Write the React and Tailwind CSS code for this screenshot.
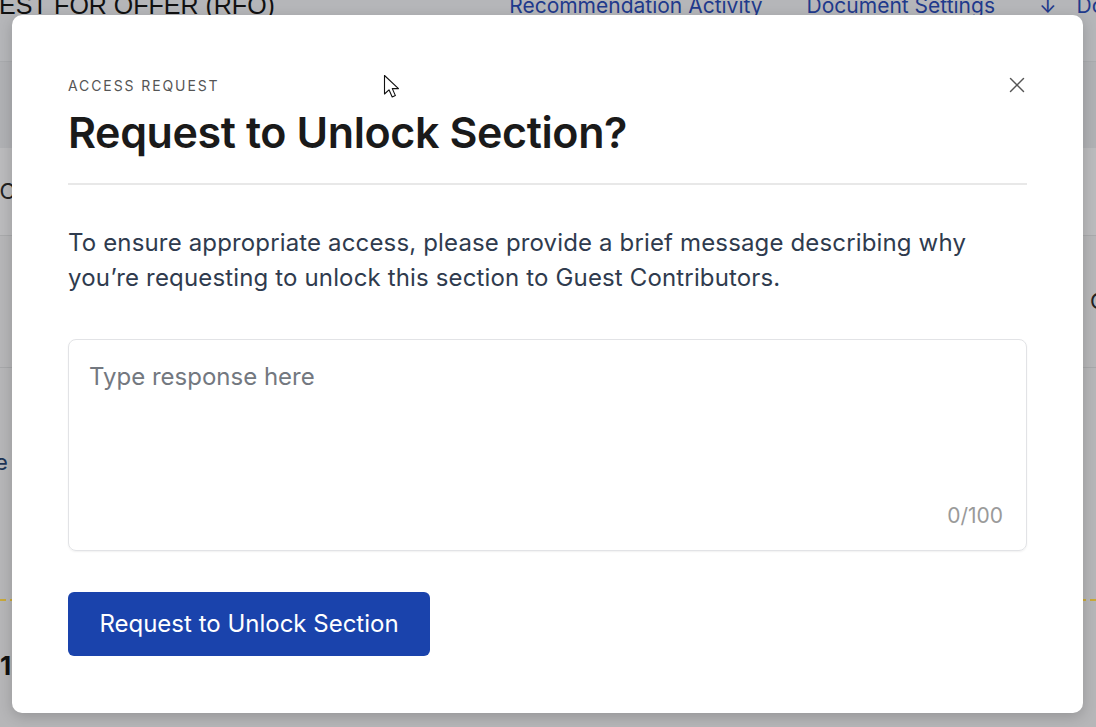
import { X } from 'lucide-react'

const font = { fontFamily: 'Inter, "Noto Sans", sans-serif' }

function BackgroundPage() {
  return (
    <div className="h-[727px] w-[1096px] overflow-hidden bg-[#b7b8ba] flex flex-col" style={font}>
      {/* top header */}
      <div className="h-[62px] shrink-0 flex items-start border-b border-[#a9abae] bg-[#b5b6b9]">
        <div className="-ml-[1px] -mt-[13px] text-[25px] text-[#111] whitespace-nowrap" style={{ fontFamily: '"Liberation Sans", Arial, sans-serif' }}>
          EST FOR OFFER (RFO)
        </div>
        <div className="ml-auto -mt-[10px] flex items-center gap-[44px] text-[21px] text-[#1f3a8c] whitespace-nowrap -mr-[80px]">
          <span>Recommendation Activity</span>
          <span>Document Settings</span>
          <span className="flex items-center gap-[20px]"><span>↓</span><span>Download</span></span>
        </div>
      </div>
      {/* bands */}
      <div className="h-[86px] shrink-0 bg-[#b0b1b4]" />
      <div className="h-[87px] shrink-0 bg-[#bbbbbd] flex items-center">
        <span className="-ml-[14px] text-[22px] text-[#222]">t C</span>
      </div>
      <div className="h-[133px] shrink-0 bg-[#b6b6b8] border-t border-[#a9aaac] border-b border-b-[#a7a8aa] flex items-center justify-end">
        <span className="-mr-[10px] text-[22px] text-[#222]">C</span>
      </div>
      <div className="flex-1 bg-[#b6b6b8] flex flex-col">
        <div className="h-[188px] shrink-0 flex items-center">
          <span className="-ml-[13px] text-[22px] text-[#1d3557]">re</span>
        </div>
        <div className="h-[43px] shrink-0" />
        <div className="w-full border-t-2 border-dashed border-[#c9a93a]" />
        <div className="h-[128px] shrink-0 flex items-center">
          <span className="text-[26px] font-bold text-[#111]">1</span>
        </div>
      </div>
    </div>
  )
}

function Cursor() {
  return (
    <svg width="20" height="28" viewBox="0 0 20 28" className="absolute left-[383px] top-[74px]">
      <path d="M1.5 1.5 L1.5 20 L6 15.8 L9.2 23 L12.4 21.6 L9.3 14.6 L15.5 14.6 Z" fill="#fff" stroke="#111" strokeWidth="1.1" strokeLinejoin="round" />
    </svg>
  )
}

export default function App() {
  return (
    <div className="relative h-[727px] w-[1096px] overflow-hidden">
      <BackgroundPage />

      {/* Modal */}
      <div
        className="absolute left-[12px] top-[15px] w-[1071px] h-[698px] bg-white rounded-[10px] shadow-[0_4px_14px_rgba(0,0,0,0.18)] px-[56px] pt-[63px]"
        style={font}
      >
        <div className="flex items-start justify-between">
          <div>
            <p className="text-[14px] leading-[16px] tracking-[1.9px] text-[#555] uppercase">Access Request</p>
            <h1 className="mt-[12px] text-[43px] leading-[52px] font-semibold text-[#1a1a1a] tracking-[-0.4px]">
              Request to Unlock Section?
            </h1>
          </div>
          <button className="mt-[-6px] mr-[-3px] text-[#555]">
            <X className="w-[26px] h-[26px]" strokeWidth={1.3} />
          </button>
        </div>

        <div className="mt-[25px] h-[2px] bg-[#e8e8e8]" />

        <p className="mt-[40px] text-[24px] leading-[35px] text-[#2f3b4e] tracking-[0.15px]">
          To ensure appropriate access, please provide a brief message describing why
          <br />
          you’re requesting to unlock this section to Guest Contributors.
        </p>

        <div className="mt-[44px] h-[212px] rounded-[8px] border border-[#e2e3e6] shadow-[0_1px_2px_rgba(0,0,0,0.06)] pl-[20px] pr-[23px] pt-[21px] pb-[22px] flex flex-col">
          <textarea
            className="flex-1 resize-none outline-none text-[24px] leading-[32px] text-[#222] placeholder:text-[#737880]"
            placeholder="Type response here"
          />
          <div className="text-right text-[21px] leading-[24px] text-[#9a9a9a]">0/100</div>
        </div>

        <button className="mt-[41px] h-[64px] w-[362px] rounded-[6px] bg-[#1a43ac] text-white text-[24px]">
          Request to Unlock Section
        </button>
      </div>

      <Cursor />
    </div>
  )
}
